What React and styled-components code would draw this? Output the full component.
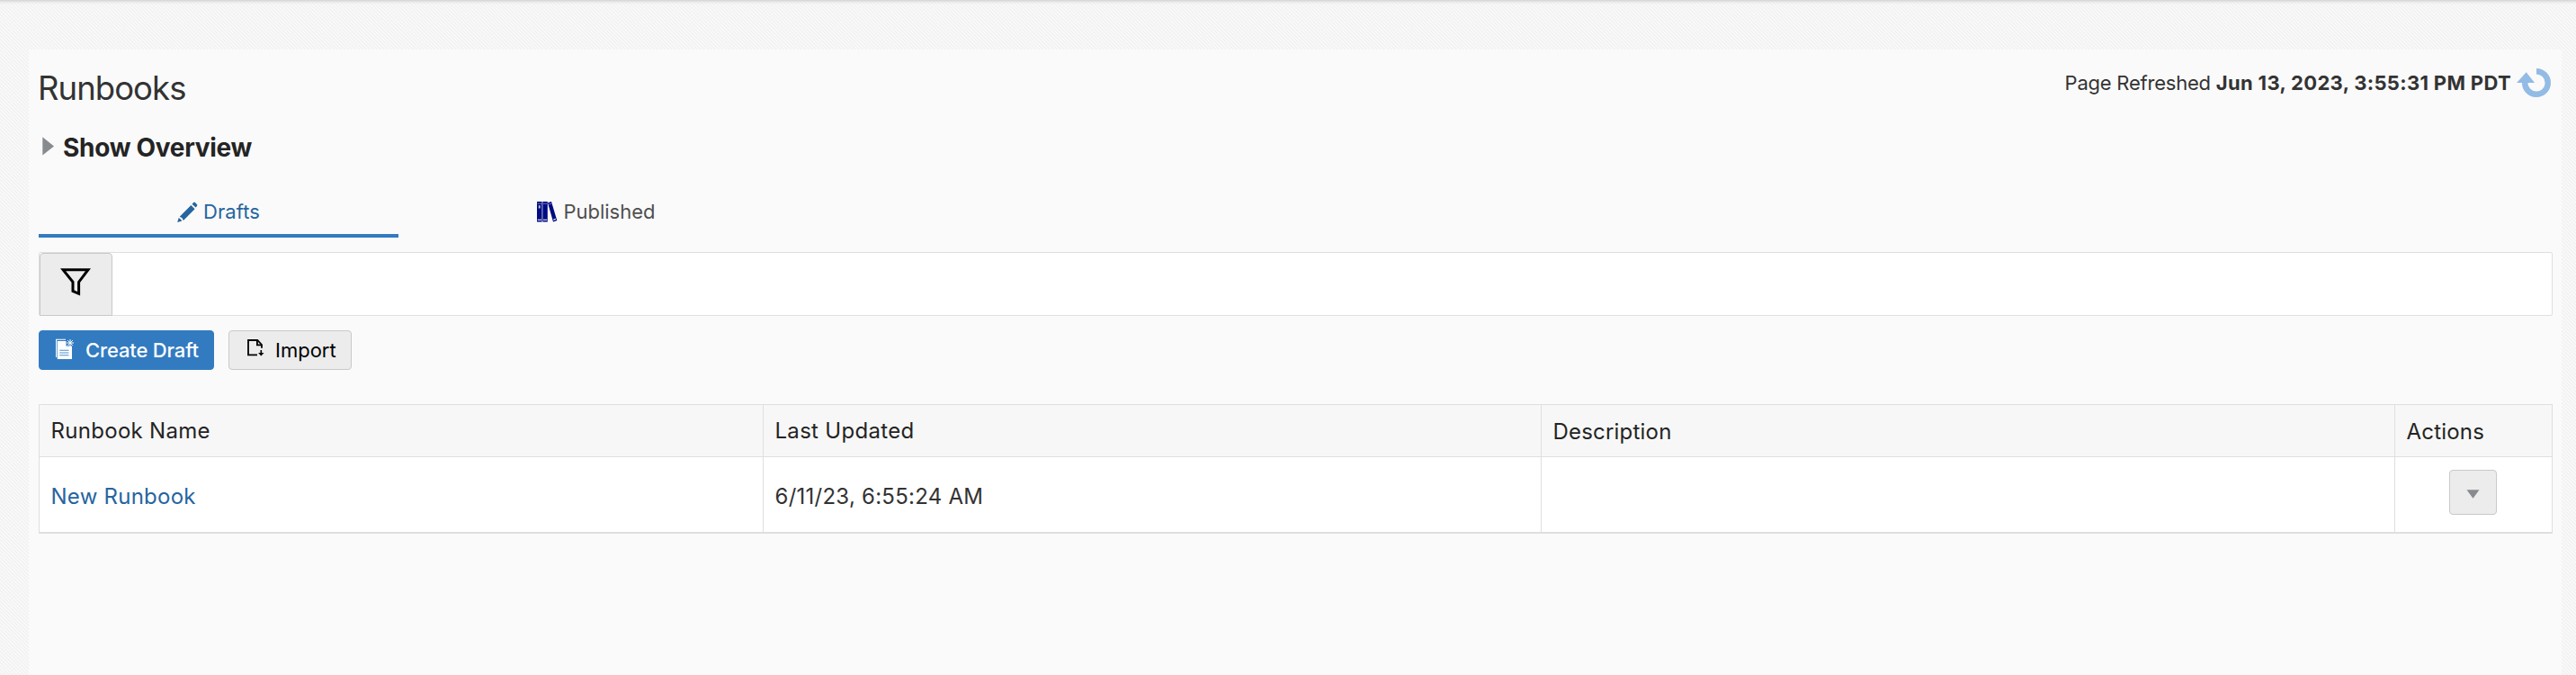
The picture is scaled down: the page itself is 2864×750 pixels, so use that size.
import React from 'react';
import styled, { createGlobalStyle } from 'styled-components';

const GlobalStyle = createGlobalStyle`
  * { box-sizing: border-box; }
  body {
    margin: 0;
    font-family: Inter, 'Liberation Sans', sans-serif;
    color: #333;
    background-color: #f6f6f6;
  }
  svg { display: block; flex: none; }
  button { font-family: inherit; }
`;

const Page = styled.div`
  display: flex;
  min-height: 750px;
  padding: 55px 16px 0 32px;
  background:
    linear-gradient(to bottom, #d4d4d4, rgba(225, 225, 225, 0.5) 50%, rgba(246, 246, 246, 0)) 0 0 / 100% 5px no-repeat,
    linear-gradient(45deg, #f2f2f2 12.5%, #f9f9f9 25% 37.5%, #f2f2f2 50% 62.5%, #f9f9f9 75% 87.5%, #f2f2f2) 0 0 / 4px 4px;
`;

const Panel = styled.main`
  flex: 1;
  padding: 16px 10px 0 11px;
  background: #fafafa;
`;

const Header = styled.header`
  display: flex;
  justify-content: space-between;
  height: 70px;
`;

const Title = styled.h1`
  margin: 7px 0 0 -1px;
  font-size: 36.5px;
  font-weight: 400;
  line-height: 40px;
  letter-spacing: -0.95px;
`;

const Refreshed = styled.div`
  display: flex;
  height: 42px;
  align-items: center;
  margin-right: 1px;
  font-size: 22px;
  letter-spacing: -0.23px;
  white-space: pre;

  strong {
    margin-right: 6px;
    font-weight: 700;
    letter-spacing: 0.34px;
  }
`;

const Overview = styled.div`
  display: flex;
  align-items: center;
  gap: 10px;
  height: 44px;
  padding-left: 4px;
  color: #242424;
  font-size: 28px;
  font-weight: 700;
  line-height: 44px;
  letter-spacing: -0.3px;

  span { padding-top: 1px; }
  svg { margin-bottom: 2px; }
`;

const Tabs = styled.nav`
  display: flex;
  gap: 20px;
  height: 64px;
  margin-top: 15px;
`;

const Tab = styled.a`
  display: flex;
  align-items: center;
  justify-content: center;
  gap: 6px;
  width: 400px;
  padding-top: 13px;
  padding-bottom: 4px;
  border-bottom: 4px solid ${(p) => (p.$active ? '#327bc0' : 'transparent')};
  color: ${(p) => (p.$active ? '#26659f' : '#4f4f4f')};
  font-size: 22px;
  letter-spacing: ${(p) => (p.$active ? '0.1px' : '0')};
`;

const FilterBar = styled.div`
  display: flex;
  height: 71px;
  margin-top: 16px;
  border: 1px solid #dfdfdf;
  border-radius: 2px;
  background: #fff;
`;

const FilterButton = styled.button`
  display: flex;
  justify-content: center;
  width: 81px;
  height: 70px;
  padding: 16px 1px 0 0;
  border: 1px solid #c9c9c9;
  border-radius: 4px 4px 0 0;
  background: #ececec;
`;

const Toolbar = styled.div`
  display: flex;
  gap: 16px;
  margin: 16px 0 38px;
`;

const Button = styled.button`
  display: flex;
  align-items: center;
  gap: 12px;
  width: ${(p) => (p.$primary ? '195px' : '137px')};
  height: 44px;
  padding: 0 0 0 ${(p) => (p.$primary ? '18px' : '20px')};
  border: 1px solid ${(p) => (p.$primary ? '#327bc0' : '#c9c9c9')};
  border-radius: 4px;
  background: ${(p) => (p.$primary ? '#327bc0' : '#ececec')};
  color: ${(p) => (p.$primary ? '#fff' : '#000')};
  font-size: 22px;
  font-weight: ${(p) => (p.$primary ? 500 : 400)};
  letter-spacing: ${(p) => (p.$primary ? '-0.15px' : '0')};
  white-space: nowrap;

  svg { margin-bottom: ${(p) => (p.$primary ? '2px' : '6px')}; }
`;

const Table = styled.div`
  display: grid;
  grid-template-columns: 805fr 865fr 949fr 174fr;
  grid-template-rows: 58px 83px;
  border: 1px solid #dfdfdf;
  border-bottom-width: 2px;
  background: #fff;
  font-size: 24px;
`;

const Cell = styled.div`
  display: flex;
  align-items: center;
  padding: 3px 0 0 12.5px;
  border-right: 1px solid #dfdfdf;
  letter-spacing: 0.25px;

  &:nth-child(4n) { border-right: 0; }
`;

const HeadCell = styled(Cell)`
  padding-top: ${(p) => (p.$lowered ? '1px' : '0')};
  padding-bottom: ${(p) => (p.$lowered ? '0' : '1px')};
  border-bottom: 1px solid #dfdfdf;
  background: #f7f7f7;
  color: #242424;
  letter-spacing: ${(p) => (p.$lowered ? '0.2px' : '0.3px')};
`;

const ActionCell = styled(Cell)`
  align-items: flex-start;
  justify-content: center;
  padding: 14px 2px 0 0;
`;

const RunbookLink = styled.a`
  color: #26659f;
`;

const MenuButton = styled.button`
  display: flex;
  align-items: center;
  justify-content: center;
  width: 53px;
  height: 50px;
  padding: 3px 0 0;
  border: 1px solid #c9c9c9;
  border-radius: 4px;
  background: #ececec;
`;

const RefreshIcon = () => (
  <svg width="39" height="34" viewBox="0 0 39 34">
    <path d="M22 4.2A12.8 12.8 0 1 1 9.2 16.5" fill="none" stroke="#92bbe5" strokeWidth="6.4" />
    <path d="M0 17 10.7 5.3 20 17Z" fill="#92bbe5" />
  </svg>
);

const PencilIcon = () => (
  <svg width="23" height="24" viewBox="0 0 23 24" fill="currentColor">
    <path d="M2.7 17.7 15.4 5 19.6 9.2 6.9 21.9 5.5 19.2Z" />
    <path d="M16.5 3.8 18.2 2Q19 1.2 20 2.1L22 4.2Q22.8 5 22 5.9L20.6 7.6Z" />
    <path d="M0.2 24 1.7 18.9 3.3 20.2 5.4 22.6Z" />
  </svg>
);

const BooksIcon = () => (
  <svg width="23" height="24" viewBox="0 0 23 24">
    <g fill="#000b80">
      <rect x="0" y="1" width="5.6" height="22.5" rx="0.5" />
      <rect x="6.3" y="1" width="5.5" height="22.5" rx="0.5" />
      <path d="M12 2.3 16 1.1 22.3 22 18 23.5Z" />
    </g>
    <path d="M0.5 3.2H5.2M6.8 3.2H11.4M13 4.2 16.2 3.2" stroke="#8d92c8" strokeWidth="0.8" />
    <path d="M0.7 21.2H5M7 21.2H11.2M18.2 21.2 20.8 20.4" stroke="#fff" strokeWidth="1.1" />
    <path d="M2.7 5.2V8.5" stroke="#c7cbe8" strokeWidth="1.8" />
  </svg>
);

const FunnelIcon = () => (
  <svg width="34" height="32" viewBox="0 0 34 32">
    <path d="M3 1.7H31L20.6 15.4V28.3L14 25.4V15.4Z" fill="none" stroke="#000" strokeWidth="3" />
  </svg>
);

const NewDocumentIcon = () => (
  <svg width="21" height="24" viewBox="0 0 21 24">
    <path d="M0.6 21V1.3H11" fill="none" stroke="#fff" strokeWidth="1.1" />
    <path d="M1.8 3H11.5V8.5H18V23H1.8Z" fill="#fff" />
    <path d="M4.2 13.2H14.5M4.2 16H14.5M4.2 18.8H14.5" stroke="#4f8fcc" strokeWidth="1.1" />
    <path d="M16 1V9M12.2 5H20M13.3 2.2 18.8 7.8M18.8 2.2 13.3 7.8" stroke="#fff" strokeWidth="1" />
  </svg>
);

const ImportIcon = () => (
  <svg width="19" height="19" viewBox="0 0 19 19" fill="none" stroke="#000">
    <path d="M11 17.4H1V1H11.2L16 6V9.7" strokeWidth="1.8" />
    <path d="M10.9 1V6.4H16" strokeWidth="1.8" />
    <path d="M15.3 12V17" strokeWidth="1.6" />
    <path d="M12.1 14.9H18.5L15.3 18.5Z" fill="#000" stroke="none" />
  </svg>
);

const DisclosureIcon = () => (
  <svg width="13" height="21" viewBox="0 0 13 21">
    <path d="M0.3 0.3 13 10.4 0.3 20.6Z" fill="#878b8e" />
  </svg>
);

const CaretIcon = () => (
  <svg width="15" height="10" viewBox="0 0 15 10">
    <path d="M0.5 0.2H14.5L7.5 9.8Z" fill="#878b8e" />
  </svg>
);

export default function App() {
  return (
    <Page>
      <GlobalStyle />
      <Panel>
        <Header>
          <Title>Runbooks</Title>
          <Refreshed>
            <span>Page Refreshed </span>
            <strong>Jun 13, 2023, 3:55:31 PM PDT</strong>
            <RefreshIcon />
          </Refreshed>
        </Header>
        <Overview>
          <DisclosureIcon />
          <span>Show Overview</span>
        </Overview>
        <Tabs>
          <Tab $active>
            <PencilIcon />
            Drafts
          </Tab>
          <Tab>
            <BooksIcon />
            Published
          </Tab>
        </Tabs>
        <FilterBar>
          <FilterButton aria-label="Filter">
            <FunnelIcon />
          </FilterButton>
        </FilterBar>
        <Toolbar>
          <Button $primary>
            <NewDocumentIcon />
            Create Draft
          </Button>
          <Button>
            <ImportIcon />
            Import
          </Button>
        </Toolbar>
        <Table>
          <HeadCell>Runbook Name</HeadCell>
          <HeadCell>Last Updated</HeadCell>
          <HeadCell $lowered>Description</HeadCell>
          <HeadCell $lowered>Actions</HeadCell>
          <Cell>
            <RunbookLink>New Runbook</RunbookLink>
          </Cell>
          <Cell>6/11/23, 6:55:24 AM</Cell>
          <Cell />
          <ActionCell>
            <MenuButton aria-label="Actions">
              <CaretIcon />
            </MenuButton>
          </ActionCell>
        </Table>
      </Panel>
    </Page>
  );
}
